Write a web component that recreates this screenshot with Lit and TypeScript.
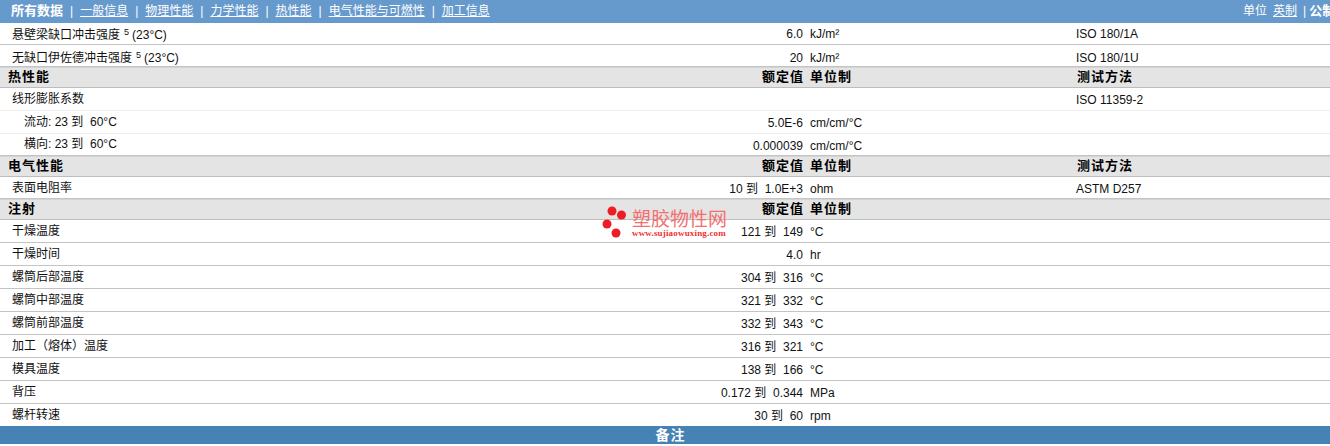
import { LitElement, html, css } from "lit";
import { customElement } from "lit/decorators.js";

type Row =
  | { kind: "head"; name: string; test?: boolean; h: number }
  | { kind: "row"; name: string; sup?: string; val?: string; unit?: string; test?: string; sub?: boolean; light?: boolean; last?: boolean; h: number; nt?: number; vt?: number };

const rows: Row[] = [
  { kind: "row", name: "悬壁梁缺口冲击强度", sup: "(23°C)", val: "6.0", unit: "kJ/m²", test: "ISO 180/1A", h: 22, nt: 5, vt: 4 },
  { kind: "row", name: "无缺口伊佐德冲击强度", sup: "(23°C)", val: "20", unit: "kJ/m²", test: "ISO 180/1U", h: 22, nt: 6, vt: 6 },
  { kind: "head", name: "热性能", test: true, h: 21 },
  { kind: "row", name: "线形膨胀系数", test: "ISO 11359-2", light: true, h: 23 },
  { kind: "row", name: "流动: 23 到  60°C", sub: true, val: "5.0E-6", unit: "cm/cm/°C", light: true, h: 23 },
  { kind: "row", name: "横向: 23 到  60°C", sub: true, val: "0.000039", unit: "cm/cm/°C", h: 22 },
  { kind: "head", name: "电气性能", test: true, h: 21 },
  { kind: "row", name: "表面电阻率", val: "10 到  1.0E+3", unit: "ohm", test: "ASTM D257", h: 22, nt: 4, vt: 5 },
  { kind: "head", name: "注射", h: 21 },
  { kind: "row", name: "干燥温度", val: "121 到  149", unit: "°C", h: 23 },
  { kind: "row", name: "干燥时间", val: "4.0", unit: "hr", h: 23 },
  { kind: "row", name: "螺筒后部温度", val: "304 到  316", unit: "°C", h: 23 },
  { kind: "row", name: "螺筒中部温度", val: "321 到  332", unit: "°C", h: 23 },
  { kind: "row", name: "螺筒前部温度", val: "332 到  343", unit: "°C", h: 23 },
  { kind: "row", name: "加工（熔体）温度", val: "316 到  321", unit: "°C", h: 23 },
  { kind: "row", name: "模具温度", val: "138 到  166", unit: "°C", h: 23 },
  { kind: "row", name: "背压", val: "0.172 到  0.344", unit: "MPa", h: 23 },
  { kind: "row", name: "螺杆转速", val: "30 到  60", unit: "rpm", last: true, h: 22, nt: 4 },
];

const links = ["一般信息", "物理性能", "力学性能", "热性能", "电气性能与可燃性", "加工信息"];

@customElement("app-root")
export class AppRoot extends LitElement {
  static styles = css`
    :host {
      display: block;
      width: 1330px;
      height: 446px;
      overflow: hidden;
      position: relative;
      background: #fff;
      font-family: "Liberation Sans", "Noto Sans CJK SC", sans-serif;
      font-size: 12px;
      line-height: 14px;
      color: #111;
    }
    .nav {
      height: 23px;
      box-sizing: border-box;
      background: #6699cc;
      color: #fff;
      display: flex;
      align-items: center;
      padding: 0 0 1px 11px;
      white-space: nowrap;
      overflow: hidden;
    }
    .nav b { font-weight: 700; font-size: 13px; }
    .nav a { color: #fff; text-decoration: underline; }
    .sep { margin: 0 7px; }
    .units { margin-left: auto; display: flex; align-items: center; width: 87px; flex: none; overflow: hidden; }
    .units span, .units a, .units b { flex: none; }
    .units a { margin-left: 6px; }
    .units .sep2 { margin: 0 3px 0 6px; }
    .row, .head {
      display: grid;
      grid-template-columns: 803px 273px 1fr;
      box-sizing: border-box;
      white-space: pre;
    }
    .row { border-bottom: 1px solid #c4c4c4; align-items: start; }
    .row.light { border-bottom-color: #eeeeee; }
    .row.last { border-bottom: 0; }
    .cell { display: flex; align-items: center; grid-row: 1; }
    .name { grid-column: 1; padding-left: 12px; z-index: 1; }
    .name.sub { padding-left: 24px; }
    .name sup { font-size: 9px; line-height: 1; margin: 0 3px 0 4px; position: relative; top: -3px; vertical-align: baseline; }
    .val { grid-column: 1; justify-content: flex-end; }
    .unit { grid-column: 2; padding-left: 7px; }
    .test { grid-column: 3; }
    .head {
      align-items: center;
      background: #e4e4e4;
      border-top: 1px solid #d4d4d4;
      border-bottom: 1px solid #bdbdbd;
      font-weight: 700;
      font-size: 13px;
      letter-spacing: 1px;
      color: #000;
    }
    .head .cell { padding-bottom: 2px; }
    .head .hn { grid-column: 1; padding-left: 8px; }
    .head .hv { grid-column: 1; justify-content: flex-end; margin-right: -1px; }
    .head .hu { grid-column: 2; padding-left: 7px; }
    .head .ht { grid-column: 3; padding-left: 1px; }
    .footer {
      height: 18px;
      background: #4682b4;
      color: #fff;
      font-weight: 700;
      font-size: 14px;
      line-height: 18px;
      text-align: center;
      letter-spacing: 1px;
      padding-left: 11px;
    }
    .mark {
      position: absolute;
      left: 602px;
      top: 205px;
      width: 128px;
      height: 36px;
      pointer-events: none;
    }
    .mark svg { position: absolute; left: 0; top: 0; }
    .mark .cn { position: absolute; left: 30px; top: 4px; font-size: 19px; line-height: 22px; color: #f27070; white-space: nowrap; }
    .mark .en { position: absolute; left: 30px; top: 23px; font-family: "Liberation Serif", serif; font-size: 9px; font-weight: 700; letter-spacing: 0.17px; line-height: 11px; color: #f03030; white-space: nowrap; }
  `;

  render() {
    return html`
      <div class="nav">
        <b>所有数据</b>
        ${links.map((l) => html`<span class="sep">|</span><a>${l}</a>`)}
        <div class="units">
          <span>单位</span><a>英制</a><span class="sep2">|</span><b>公制</b>
        </div>
      </div>
      ${rows.map((r) => {
        if (r.kind === "head") {
          return html`<div class="head" style="height:${r.h}px">
            <div class="cell hn">${r.name}</div>
            <div class="cell hv">额定值</div>
            <div class="cell hu">单位制</div>
            ${r.test ? html`<div class="cell ht">测试方法</div>` : ""}
          </div>`;
        }
        const nt = r.nt ?? (r.h === 22 ? 3 : 4);
        const vt = r.vt ?? 5;
        return html`<div class="row ${r.light ? "light" : ""} ${r.last ? "last" : ""}" style="height:${r.h}px">
          <div class="cell name ${r.sub ? "sub" : ""}" style="padding-top:${nt}px">
            <span>${r.name}</span>${r.sup ? html`<sup>5</sup><span>${r.sup}</span>` : ""}
          </div>
          <div class="cell val" style="padding-top:${vt}px">${r.val ?? ""}</div>
          <div class="cell unit" style="padding-top:${vt}px">${r.unit ?? ""}</div>
          <div class="cell test" style="padding-top:${vt}px">${r.test ?? ""}</div>
        </div>`;
      })}
      <div class="footer">备注</div>
      <div class="mark">
        <svg width="30" height="36" viewBox="0 0 30 36">
          <circle cx="10" cy="6" r="4.5" fill="#ee1c25" />
          <circle cx="19.5" cy="10" r="4.5" fill="#ee1c25" />
          <circle cx="5" cy="19" r="4.5" fill="#ee1c25" />
          <circle cx="14" cy="28" r="4.5" fill="#ee1c25" />
        </svg>
        <div class="cn">塑胶物性网</div>
        <div class="en">www.sujiaowuxing.com</div>
      </div>
    `;
  }
}
